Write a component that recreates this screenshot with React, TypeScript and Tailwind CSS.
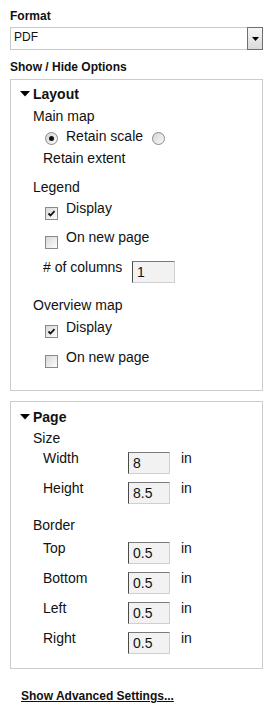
import React from "react";

function Caret() {
    return (
        <svg width="10" height="6" viewBox="0 0 10 6" className="block">
            <polygon points="0,0 10,0 5,5.5" fill="#000" />
        </svg>
    );
}

function Check({ checked }: { checked?: boolean }) {
    return (
        <span className="relative block size-[13px] shrink-0 border border-[#8a8a8a] bg-gradient-to-br from-[#d8d8d8] to-[#fdfdfd]">
            {checked && (
                <svg width="11" height="11" viewBox="0 0 11 11" className="absolute left-0 top-0">
                    <path d="M2.5 5.5 L4.5 7.5 L8.5 3.2" fill="none" stroke="#111" strokeWidth="1.8" />
                </svg>
            )}
        </span>
    );
}

function Radio({ checked }: { checked?: boolean }) {
    return (
        <span className="relative flex size-[13px] shrink-0 items-center justify-center rounded-full border border-[#8a8a8a] bg-gradient-to-br from-[#d4d4d4] to-[#fafafa]">
            {checked && <span className="block size-[5px] rounded-full bg-[#111]" />}
        </span>
    );
}

function Field({ value, wide }: { value: string; wide?: boolean }) {
    return (
        <span
            className={
                "block h-[22px] shrink-0 border-t border-l border-t-[#7a7a7a] border-l-[#4a4a4a] border-r border-b border-r-[#cfcfcf] border-b-[#cfcfcf] bg-[#f2f2f2] pl-[4px] pt-[2px] text-[14px] leading-[16px] " +
                (wide ? "w-[43px]" : "w-[42px]")
            }
        >
            {value}
        </span>
    );
}

function SizeRow({ label, value, first }: { label: string; value: string; first?: boolean }) {
    return (
        <div className={"flex h-[16px] items-start pl-[10px] " + (first ? "mt-[4px]" : "mt-[14px]")}>
            <span className="w-[85px]">{label}</span>
            <span className="mt-[2px]">
                <Field value={value} />
            </span>
            <span className="ml-[11px]">in</span>
        </div>
    );
}

function App() {
    return (
        <div className="h-[717px] w-[269px] overflow-hidden bg-white font-['Liberation_Sans',Arial,sans-serif] text-[#111]">
            <div className="pl-[10px] pt-[8px]">
                <div className="text-[12px] font-bold leading-[16px]">Format</div>

                {/* FORMAT SELECT */}
                <div className="mt-[3px] flex h-[23px] w-[253px]">
                    <div className="flex-1 border-y border-l border-[#c9c9c9] pl-[3px] pt-[1px] text-[12px] leading-[16px]">
                        PDF
                    </div>
                    <div className="flex h-[23px] w-[16px] items-center justify-center border border-[#6f6f6f] bg-gradient-to-b from-[#f6f6f6] to-[#dadada]">
                        <svg width="7" height="4" viewBox="0 0 7 4">
                            <polygon points="0,0 7,0 3.5,4" fill="#000" />
                        </svg>
                    </div>
                </div>

                <div className="mt-[9px] text-[12px] font-bold leading-[16px]">Show / Hide Options</div>

                {/* LAYOUT */}
                <div className="mt-[4px] w-[253px] border border-[#cccccc] pb-[25px] pl-[9px] pt-[6px] text-[14px] leading-[16px]">
                    <div className="flex h-[16px] items-center gap-[3px] font-bold">
                        <Caret />
                        <span>Layout</span>
                    </div>

                    <div className="pl-[13px]">
                        <div className="mt-[6px]">Main map</div>

                        <div className="mt-[4px] flex h-[16px] items-start pl-[12px]">
                            <span className="mt-[4px]">
                                <Radio checked />
                            </span>
                            <span className="ml-[8px]">Retain scale</span>
                            <span className="ml-[9px] mt-[4px]">
                                <Radio />
                            </span>
                        </div>
                        <div className="mt-[6px] pl-[10px]">Retain extent</div>

                        <div className="mt-[13px]">Legend</div>
                        <div className="mt-[5px] flex h-[16px] items-start pl-[12px]">
                            <span className="mt-[7px]">
                                <Check checked />
                            </span>
                            <span className="ml-[8px]">Display</span>
                        </div>
                        <div className="mt-[13px] flex h-[16px] items-start pl-[12px]">
                            <span className="mt-[7px]">
                                <Check />
                            </span>
                            <span className="ml-[8px]">On new page</span>
                        </div>
                        <div className="mt-[14px] flex h-[16px] items-start pl-[10px]">
                            <span className="w-[89px]">&#35; of columns</span>
                            <span className="mt-[2px]">
                                <Field value="1" wide />
                            </span>
                        </div>

                        <div className="mt-[22px]">Overview map</div>
                        <div className="mt-[6px] flex h-[16px] items-start pl-[12px]">
                            <span className="mt-[6px]">
                                <Check checked />
                            </span>
                            <span className="ml-[8px]">Display</span>
                        </div>
                        <div className="mt-[14px] flex h-[16px] items-start pl-[12px]">
                            <span className="mt-[6px]">
                                <Check />
                            </span>
                            <span className="ml-[8px]">On new page</span>
                        </div>
                    </div>
                </div>

                {/* PAGE */}
                <div className="mt-[10px] w-[253px] border border-[#cccccc] pb-[22px] pl-[9px] pt-[7px] text-[14px] leading-[16px]">
                    <div className="flex h-[16px] items-center gap-[3px] font-bold">
                        <Caret />
                        <span>Page</span>
                    </div>

                    <div className="pl-[13px]">
                        <div className="mt-[5px]">Size</div>
                        <SizeRow label="Width" value="8" first />
                        <SizeRow label="Height" value="8.5" />

                        <div className="mt-[21px]">Border</div>
                        <div className="mt-[7px]" />
                        <SizeRow label="Top" value="0.5" first />
                        <SizeRow label="Bottom" value="0.5" />
                        <SizeRow label="Left" value="0.5" />
                        <SizeRow label="Right" value="0.5" />
                    </div>
                </div>

                <a href="#" className="ml-[11px] mt-[19px] block w-fit text-[12px] font-bold leading-[16px] text-[#111] underline">
                    Show Advanced Settings...
                </a>
            </div>
        </div>
    );
}

export default App;
